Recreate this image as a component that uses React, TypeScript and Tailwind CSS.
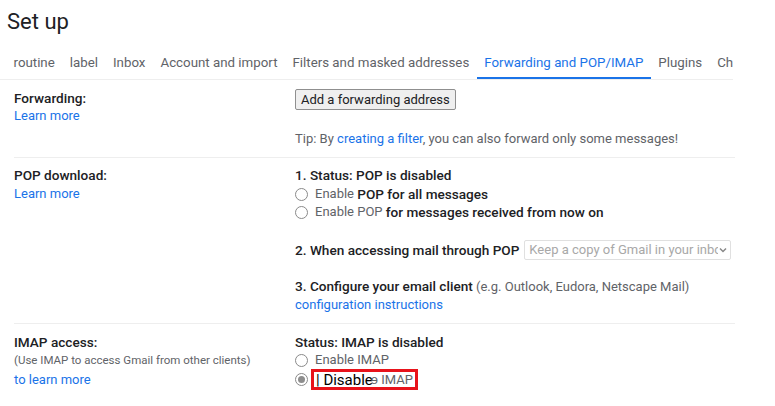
import React from 'react';

const tabs = ['routine', 'label', 'Inbox', 'Account and import', 'Filters and masked addresses', 'Forwarding and POP/IMAP', 'Plugins', 'Chat and Meet'];

function Radio({ checked = false }: { checked?: boolean }) {
  return (
    <span className="mr-[7px] inline-flex h-[13px] w-[13px] shrink-0 items-center justify-center rounded-full border border-[#8a8a8a] bg-white">
      {checked && <span className="h-[7px] w-[7px] rounded-full bg-[#8d8d8d]" />}
    </span>
  );
}

export default function App() {
  return (
    <div className="h-[406px] w-[775px] overflow-hidden bg-white text-[13px] leading-[18px] text-[#202124]" style={{ fontFamily: 'Roboto, "Liberation Sans", sans-serif' }}>
      <h1 className="pl-[7px] pt-[8px] text-[22px] leading-[28px] text-[#202124]">Set up</h1>

      <div className="mt-[18px] flex w-[733px] overflow-hidden whitespace-nowrap border-b border-[#eeeeee] pl-[6px] text-[13.3px]">
        {tabs.map((t) => (
          <div
            key={t}
            className={
              t === 'Forwarding and POP/IMAP'
                ? 'shrink-0 border-b-2 border-[#1a73e8] px-[7.5px] pb-[5px] text-[#1a73e8]'
                : 'shrink-0 border-b-2 border-transparent px-[7.5px] pb-[5px] text-[#5f6368]'
            }
          >
            {t}
          </div>
        ))}
      </div>

      <div className="ml-[14px] w-[721px]">
        {/* Forwarding */}
        <div className="flex border-b border-[#eeeeee] pb-[9px] pt-[9px]">
          <div className="w-[281px] shrink-0">
            <div className="text-[13.6px] font-medium">Forwarding:</div>
            <div className="text-[#1a73e8]">Learn more</div>
          </div>
          <div>
            <button className="h-[21px] rounded-[2px] border border-[#8f8f8f] bg-[#efefef] px-[5px] text-[13px] leading-[19px] text-[#202124]">
              Add a forwarding address
            </button>
            <div className="mt-[20px] text-[#5f6368]">
              Tip: By <span className="text-[#1a73e8]">creating a filter</span>, you can also forward only some messages!
            </div>
          </div>
        </div>

        {/* POP */}
        <div className="flex border-b border-[#eeeeee] pb-[9px] pt-[8px]">
          <div className="w-[281px] shrink-0">
            <div className="text-[13.6px] font-medium leading-[19px]">POP download:</div>
            <div className="text-[#1a73e8]">Learn more</div>
          </div>
          <div>
            <div className="text-[13.6px] font-medium leading-[19px]">1. Status: POP is disabled</div>
            <div className="flex items-center text-[#5f6368]">
              <Radio />
              Enable&nbsp;<span className="text-[13.6px] font-medium text-[#202124]">POP for all messages</span>
            </div>
            <div className="flex items-center text-[#5f6368]">
              <Radio />
              Enable POP&nbsp;<span className="text-[13.6px] font-medium text-[#202124]">for messages received from now on</span>
            </div>
            <div className="mt-[19px] flex items-center whitespace-nowrap">
              <span className="mr-[5px] text-[13.6px] font-medium">2. When accessing mail through POP</span>
              <div className="flex h-[20px] w-[207px] items-center overflow-hidden rounded-[2px] border border-[#e0e0e0] pl-[4px] pr-[2px] text-[#a8a8a8]">
                <span className="flex-1 overflow-hidden">Keep a copy of Gmail in your inbox</span>
                <svg width="10" height="10" viewBox="0 0 10 10" className="shrink-0">
                  <path d="M2 3.5 L5 6.5 L8 3.5" fill="none" stroke="#888" strokeWidth="1.5" />
                </svg>
              </div>
            </div>
            <div className="mt-[17px]">
              <span className="text-[13.6px] font-medium">3. Configure your email client</span>{' '}
              <span className="text-[#5f6368]">(e.g. Outlook, Eudora, Netscape Mail)</span>
            </div>
            <div className="text-[#1a73e8]">configuration instructions</div>
          </div>
        </div>

        {/* IMAP */}
        <div className="flex pt-[9px]">
          <div className="w-[281px] shrink-0">
            <div className="text-[13.6px] font-medium">IMAP access:</div>
            <div className="text-[11.5px] leading-[19px] text-[#5f6368]">(Use IMAP to access Gmail from other clients)</div>
            <div className="mt-[1px] text-[#1a73e8]">to learn more</div>
          </div>
          <div>
            <div className="text-[13.6px] font-medium">Status: IMAP is disabled</div>
            <div className="flex items-center text-[#5f6368]">
              <Radio />
              Enable IMAP
            </div>
            <div className="flex items-center">
              <Radio checked />
              <span className="-ml-[4px] flex h-[21px] w-[107px] items-center border-[3px] border-[#e8131b] pl-[2px]">
                <span className="text-[15px] leading-[14px] text-black">| Disable</span>
                <span className="-ml-[2px] text-[13px] leading-[14px] text-[#5f6368]">ɘ IMAP</span>
              </span>
            </div>
          </div>
        </div>
      </div>
    </div>
  );
}
